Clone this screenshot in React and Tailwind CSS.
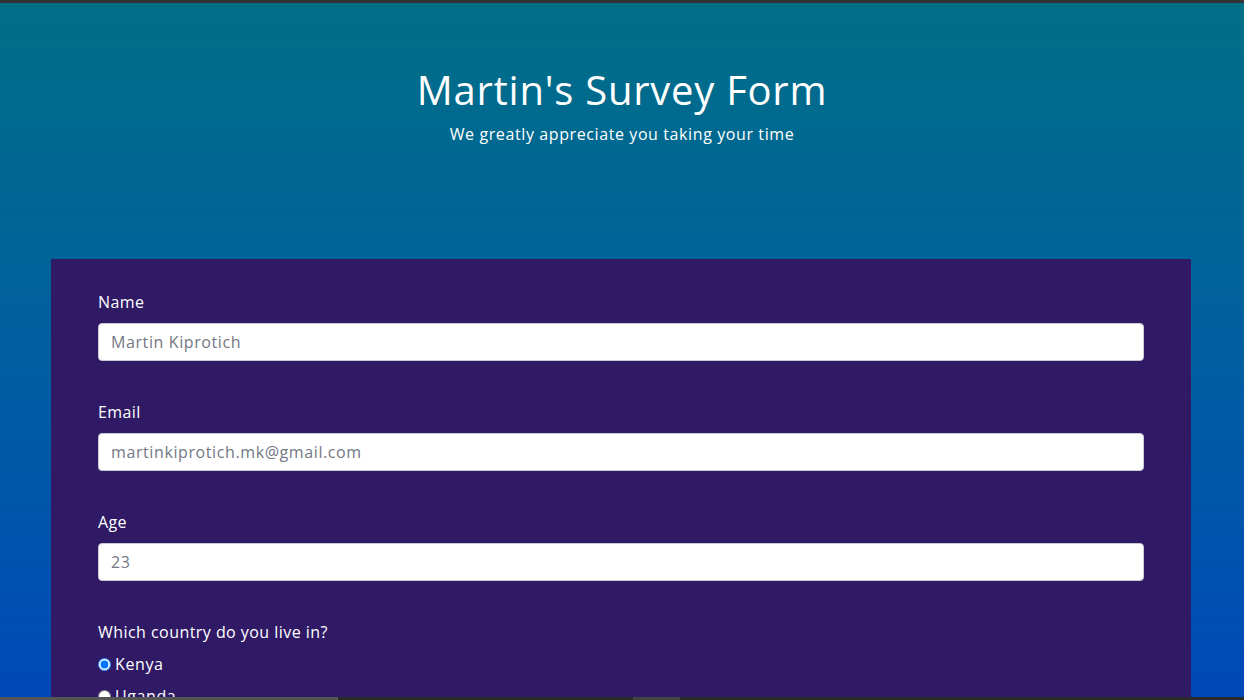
import React from 'react'

const fields = [
    { id: 'name', label: 'Name', placeholder: 'Martin Kiprotich', type: 'text' },
    { id: 'email', label: 'Email', placeholder: 'martinkiprotich.mk@gmail.com', type: 'email' },
    { id: 'age', label: 'Age', placeholder: '23', type: 'number' },
]

const countries = ['Kenya', 'Uganda', 'Tanzania', 'Rwanda']

function App() {
    return (
        <div className="min-h-screen bg-fixed bg-gradient-to-b from-[#006f86] to-[#0048b8] text-white font-['Open_Sans',sans-serif]">
            <div className="fixed top-0 left-0 w-full h-[3px] bg-[#333333] z-10" />
            <header className="flex flex-col items-center pt-[66px] pb-[113px]">
                <h1 className="text-[40px] leading-[48px] tracking-[0.75px]">Martin's Survey Form</h1>
                <p className="mt-[8px] text-[16px] leading-6 tracking-[0.6px]">We greatly appreciate you taking your time</p>
            </header>
            <main className="ml-[51px] mr-[53px] bg-[#301a66] px-[47px] pt-[31px] pb-12">
                <form className="flex flex-col">
                    {fields.map((f) => (
                        <div key={f.id} className="flex flex-col mb-[39px]">
                            <label htmlFor={f.id} className="text-[16px] font-medium leading-6 mb-[9px] tracking-[0.4px]">{f.label}</label>
                            <input
                                id={f.id}
                                type={f.type}
                                placeholder={f.placeholder}
                                className="h-[38px] w-full rounded bg-white border border-[#c9c9d6] px-3 text-[16px] tracking-[0.6px] text-gray-800 placeholder:text-[#737884] outline-none"
                            />
                        </div>
                    ))}
                    <div className="flex flex-col">
                        <p className="text-[16px] font-medium leading-6 mb-[8px] tracking-[0.45px]">Which country do you live in?</p>
                        {countries.map((c, i) => (
                            <label key={c} className="flex items-center gap-[4px] text-[16px] leading-6 mb-[8px] tracking-[0.6px]">
                                <input type="radio" name="country" defaultChecked={i === 0} className="m-0 w-[13px] h-[13px] accent-[#0075ff]" />
                                {c}
                            </label>
                        ))}
                    </div>
                </form>
            </main>
            <div className="fixed bottom-0 left-0 w-full h-[3px] bg-[#2a2a2a] z-10 flex">
                <div className="w-[338px] h-full bg-[#555555]" />
                <div className="ml-[295px] w-[47px] h-full bg-[#444444]" />
            </div>
        </div>
    )
}

export default App
